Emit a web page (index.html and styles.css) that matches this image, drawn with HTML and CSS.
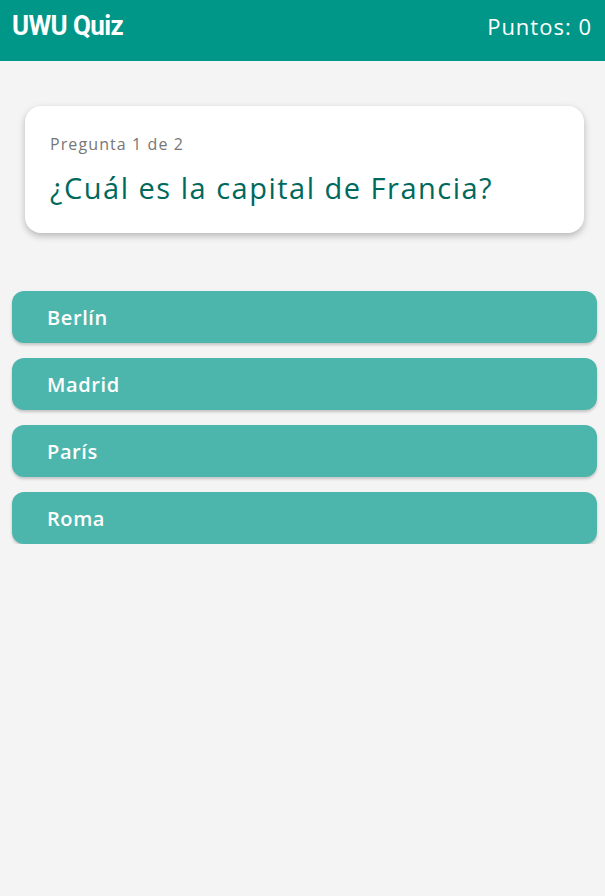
FILE: index.html
```html
<!DOCTYPE html>
<html lang="es">
<head>
<meta charset="utf-8">
<title>UWU Quiz</title>
<link rel="stylesheet" href="styles.css">
</head>
<body>
<header class="topbar">
  <h1 class="brand">UWU Quiz</h1>
  <div class="score">Puntos: 0</div>
</header>
<main class="content">
  <section class="card">
    <p class="counter">Pregunta 1 de 2</p>
    <h2 class="question">¿Cuál es la capital de Francia?</h2>
  </section>
  <div class="options">
    <button class="option">Berlín</button>
    <button class="option">Madrid</button>
    <button class="option">París</button>
    <button class="option">Roma</button>
  </div>
</main>
</body>
</html>
```
FILE: styles.css
```css
html, body {
  margin: 0;
  padding: 0;
  background: #f4f4f4;
  font-family: "Open Sans", "Noto Sans", sans-serif;
}
.topbar {
  height: 61px;
  background: #009688;
  color: #fff;
  display: flex;
  align-items: center;
  justify-content: space-between;
  padding: 0 13px 9px 12px;
  box-sizing: border-box;
}
.brand {
  margin: 0;
  font-family: "Roboto", sans-serif;
  font-weight: 700;
  font-size: 27px;
  letter-spacing: -0.6px;
  transform: scaleX(0.96);
  transform-origin: left center;
}
.score {
  font-size: 22px;
  letter-spacing: 1px;
}
.content {
  padding: 45px 8px 0 12px;
}
.card {
  margin: 0 13px;
  background: #fff;
  border-radius: 16px;
  box-shadow: 0 3px 7px rgba(0,0,0,0.25);
  padding: 27px 25px 26px;
}
.counter {
  margin: 0;
  font-size: 16px;
  color: #777;
  letter-spacing: 1.1px;
}
.question {
  margin: 13px 0 0;
  font-size: 29px;
  font-weight: 500;
  color: #00695c;
  letter-spacing: 1.5px;
}
.options {
  margin-top: 58px;
  display: flex;
  flex-direction: column;
  gap: 15px;
}
.option {
  height: 52px;
  border: none;
  border-radius: 12px;
  background: #4db6ac;
  color: #fff;
  text-align: left;
  padding: 0 35px;
  font-family: "Open Sans", "Noto Sans", sans-serif;
  font-size: 20px;
  font-weight: 600;
  letter-spacing: 0.6px;
  box-shadow: 0 2px 3px rgba(0,0,0,0.2);
}
```
